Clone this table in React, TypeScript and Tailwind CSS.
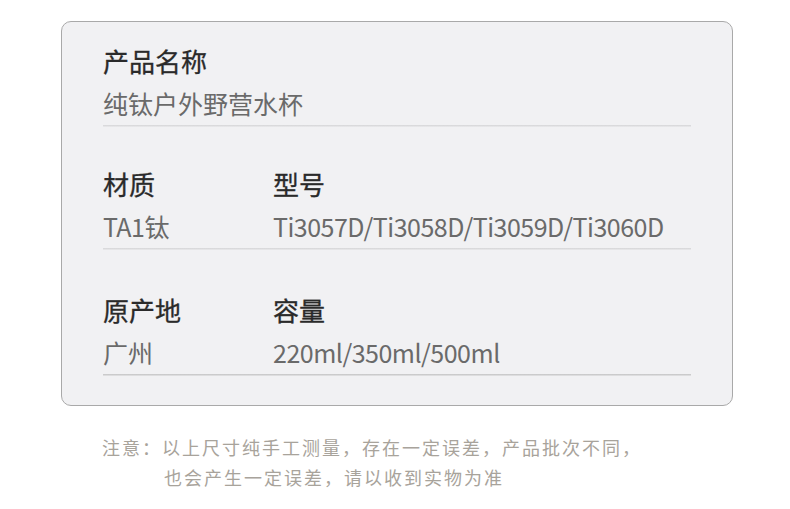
const font = { fontFamily: '"Noto Sans CJK SC", "Noto Sans", sans-serif' }

function Divider({ strong }: { strong?: boolean }) {
    return (
        <div className={strong ? "h-[2px] bg-gradient-to-b from-[#c2c2c2] to-[#e6e6e8]" : "h-[2px] bg-gradient-to-b from-[#d4d4d6] to-[#ebebed]"} />
    )
}

function Field({ label, value, w, latin }: { label: string, value: string, w?: string, latin?: boolean }) {
    return (
        <div className={w}>
            <p className="text-[26px] leading-[40px] font-normal text-[#2a2a2a] [-webkit-text-stroke:0.3px_#2a2a2a]">{label}</p>
            <p className={latin ? "text-[25px] leading-[44px] tracking-[-0.5px] text-[#6a6a6a]" : "text-[25px] leading-[44px] text-[#6a6a6a]"}>{value}</p>
        </div>
    )
}

export default function App() {
    return (
        <div className="w-[790px] h-[509px] bg-white overflow-hidden" style={font}>
            <div className="ml-[61px] mt-[21px] w-[672px] h-[385px] rounded-[10px] border border-[#a9a9a9] bg-[#f1f1f3] px-[41px]">
                <div className="pt-[19px]">
                    <Field label="产品名称" value="纯钛户外野营水杯" />
                    <Divider />
                </div>
                <div className="pt-[37px]">
                    <div className="flex">
                        <Field label="材质" value="TA1钛" w="w-[170px]" latin />
                        <Field label="型号" value="Ti3057D/Ti3058D/Ti3059D/Ti3060D" latin />
                    </div>
                    <Divider />
                </div>
                <div className="pt-[40px]">
                    <div className="flex">
                        <Field label="原产地" value="广州" w="w-[170px]" />
                        <Field label="容量" value="220ml/350ml/500ml" latin />
                    </div>
                    <Divider strong />
                </div>
            </div>
            <div className="mt-[26px] ml-[102px] text-[18px] leading-[30px] tracking-[2px] text-[#a8a39b]">
                <p>注意：以上尺寸纯手工测量，存在一定误差，产品批次不同，</p>
                <p className="pl-[62px]">也会产生一定误差，请以收到实物为准</p>
            </div>
        </div>
    )
}
